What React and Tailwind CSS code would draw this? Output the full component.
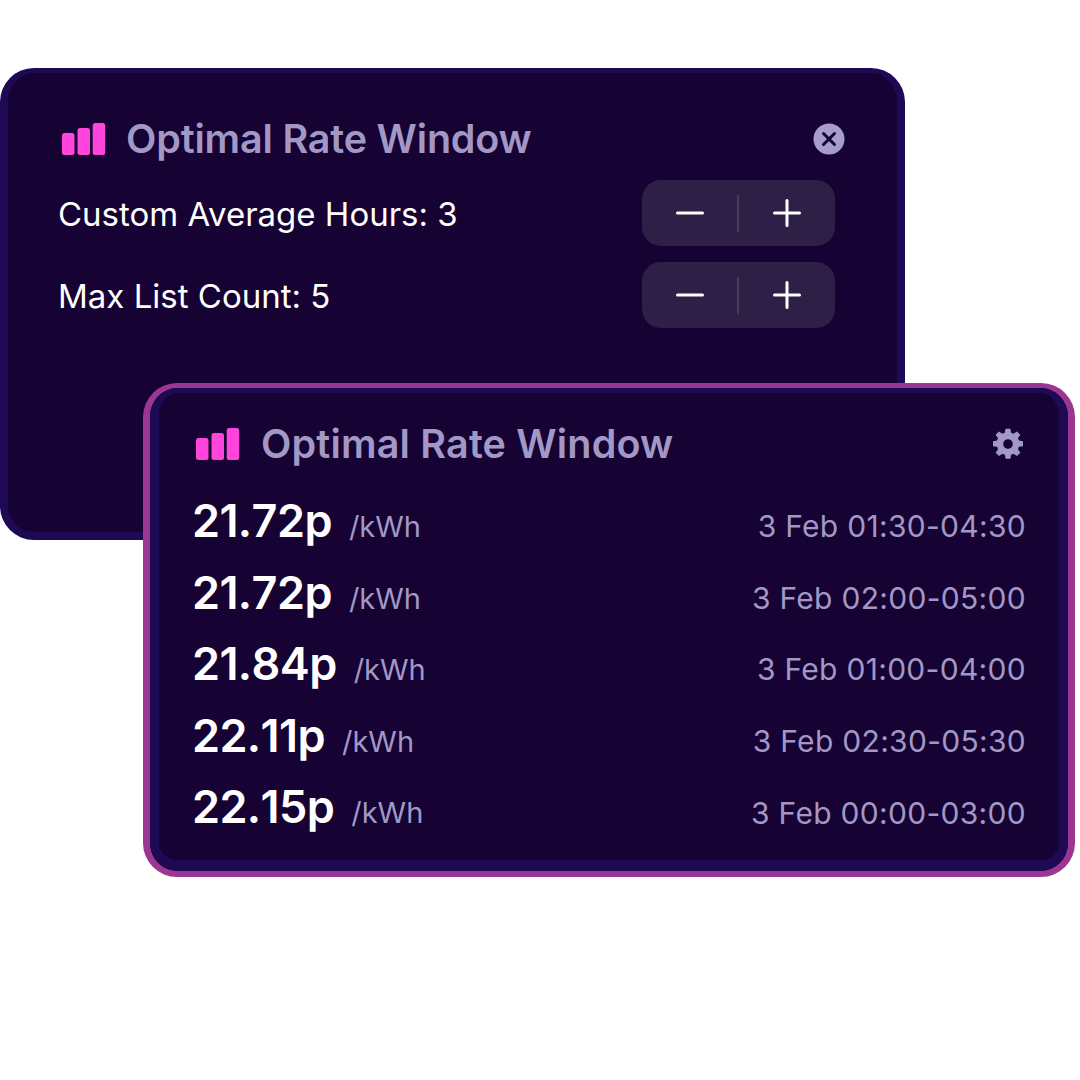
function Bars() {
  return (
    <svg width="44" height="32" viewBox="0 0 44 32" className="shrink-0 block">
      <rect x="0" y="10" width="12.5" height="22" rx="2.5" fill="#ff45dc" />
      <rect x="15.5" y="5" width="12.5" height="27" rx="2.5" fill="#ff45dc" />
      <rect x="30.7" y="0" width="12.5" height="32" rx="2.5" fill="#ff45dc" />
    </svg>
  );
}

function Stepper() {
  return (
    <div className="w-[193px] h-[66px] rounded-[19px] bg-[#2e1f47] flex items-center">
      <div className="w-[95px] flex justify-center">
        <svg width="30" height="4" viewBox="0 0 30 4" className="block"><rect x="1" y="0.5" width="28" height="3" rx="1.5" fill="#fff" /></svg>
      </div>
      <div className="w-[2px] h-[37px] bg-[#493b60]" />
      <div className="w-[95px] flex justify-center">
        <svg width="30" height="30" viewBox="0 0 30 30" className="block">
          <rect x="1" y="13.5" width="28" height="3" rx="1.5" fill="#fff" />
          <rect x="13.5" y="1" width="3" height="28" rx="1.5" fill="#fff" />
        </svg>
      </div>
    </div>
  );
}

function Row({ price, time }) {
  return (
    <div className="h-[71.6px] flex items-center justify-between">
      <div className="flex items-baseline pb-[10px]">
        <span className="text-[45px] font-semibold text-white tracking-[-0.6px] [font-kerning:none]">{price}</span>
        <span className="text-[29px] text-[#a198c6] ml-[17px]">/kWh</span>
      </div>
      <span className="text-[30px] text-[#a198c6] tracking-[0.3px] pt-[2px]">{time}</span>
    </div>
  );
}

const rows = [
  ["21.72p", "3 Feb 01:30-04:30"],
  ["21.72p", "3 Feb 02:00-05:00"],
  ["21.84p", "3 Feb 01:00-04:00"],
  ["22.11p", "3 Feb 02:30-05:30"],
  ["22.15p", "3 Feb 00:00-03:00"],
];

export default function App() {
  return (
    <div className="w-[1080px] h-[1080px] bg-white pt-[68px] font-['Inter',sans-serif] overflow-hidden">
      <div className="w-[905px] h-[472px] rounded-[34px] bg-[#160233] border-x-[8px] border-t-[5px] border-b-[8px] border-[#1e0a54] pl-[50px] pr-[52px] pt-[37px]">
        <div className="flex items-center h-[58px] pl-[4px]">
          <Bars />
          <span className="ml-[20px] pt-[2px] text-[39.5px] font-semibold text-[#a198c6] tracking-[-0.18px]">Optimal Rate Window</span>
          <svg width="32" height="32" viewBox="0 0 32 32" className="ml-auto block">
            <circle cx="16" cy="16" r="15.5" fill="#a69dcb" />
            <path d="M10.5 10.5 L21.5 21.5 M21.5 10.5 L10.5 21.5" stroke="#160233" strokeWidth="3" strokeLinecap="round" />
          </svg>
        </div>
        <div className="flex items-center justify-between h-[66px] mt-[12px] pr-[10px]">
          <span className="text-[33px] text-white pt-[4px]">Custom Average Hours: 3</span>
          <Stepper />
        </div>
        <div className="flex items-center justify-between h-[66px] mt-[16px] pr-[10px]">
          <span className="text-[33px] text-white pt-[4px]">Max List Count: 5</span>
          <Stepper />
        </div>
      </div>
      <div className="relative ml-[143px] mt-[-157px] w-[932px] h-[494px] rounded-[34px] border-x-[7px] border-t-[5px] border-b-[6px] border-[#9b3792] bg-[#160233]">
        <div className="h-full rounded-[28px] border-x-[9px] border-t-[5px] border-b-[11px] border-[#1e0a54] pl-[33px] pr-[33px] pt-[22px]">
          <div className="flex items-center h-[58px] pl-[4px]">
            <Bars />
            <span className="ml-[21px] pt-[2px] text-[39.5px] font-semibold text-[#a198c6] tracking-[0.18px]">Optimal Rate Window</span>
            <svg width="34" height="34" viewBox="0 0 24 24" className="ml-auto mr-[1px] block">
              <path fill="#a198c6" fillRule="evenodd" d="M10.3 1.2h3.4l.5 2.9c.6.2 1.2.4 1.7.7l2.4-1.7 2.4 2.4-1.7 2.4c.3.5.5 1.1.7 1.7l2.9.5v3.4l-2.9.5c-.2.6-.4 1.2-.7 1.7l1.7 2.4-2.4 2.4-2.4-1.7c-.5.3-1.1.5-1.7.7l-.5 2.9h-3.4l-.5-2.9c-.6-.2-1.2-.4-1.7-.7l-2.4 1.7-2.4-2.4 1.7-2.4c-.3-.5-.5-1.1-.7-1.7l-2.9-.5v-3.4l2.9-.5c.2-.6.4-1.2.7-1.7L3.2 5.5l2.4-2.4L8 4.8c.5-.3 1.1-.5 1.7-.7zM12 8.6a3.4 3.4 0 1 0 0 6.8 3.4 3.4 0 0 0 0-6.8z" />
            </svg>
          </div>
          <div className="mt-[17px]">
            {rows.map((r, i) => (
              <Row key={i} price={r[0]} time={r[1]} />
            ))}
          </div>
        </div>
      </div>
    </div>
  );
}
